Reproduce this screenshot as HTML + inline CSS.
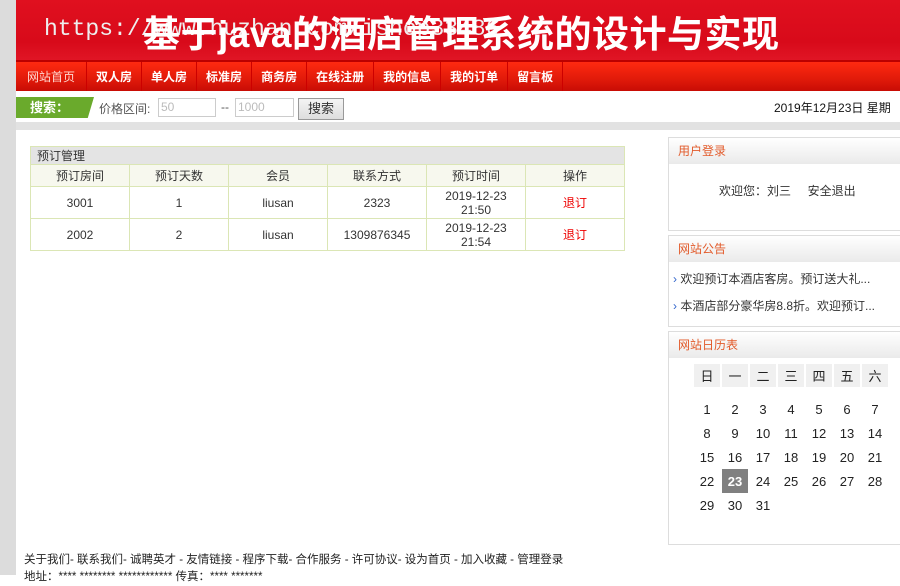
<!DOCTYPE html>
<html><head><meta charset="utf-8"><style>
*{margin:0;padding:0;box-sizing:border-box}
body{width:900px;height:575px;overflow:hidden;background:#fff;font-family:"Liberation Sans","Noto Sans CJK SC",sans-serif;font-size:12px;color:#333;position:relative}
.abs{position:absolute}
#strip{left:0;top:0;width:16px;height:575px;background:#dcdcdc}
#hdr{left:16px;top:0;width:884px;height:60px;background:linear-gradient(#e0101f,#d80a1a 70%,#e01525)}
#url{left:44px;top:16px;font-family:"Liberation Mono",monospace;font-size:23px;color:#eee}
#title{left:143px;top:4px;font-size:37px;font-weight:bold;color:#fff;white-space:nowrap;letter-spacing:0.5px}
#nav{left:16px;top:60px;width:884px;height:31px;background:linear-gradient(#ff2a10,#e01a0a 60%,#c80c05);border-top:2px solid #b00}
#nav span{float:left;height:29px;line-height:30px;color:#fff;font-weight:bold;font-size:12px;padding:0 9px;border-right:1px solid #c00}
#nav span.a{color:#ffd7cf;font-weight:normal;padding:0 11px}
#srch{left:16px;top:91px;width:884px;height:31px;background:#fff}
#sl{left:16px;top:97px;width:78px;height:21px;background:#6aaa2c;color:#fff;font-weight:bold;font-size:13px;line-height:21px;padding-left:14px;clip-path:polygon(0 0,100% 0,92% 100%,0 100%)}
#gray{left:16px;top:122px;width:884px;height:8px;background:#e2e2e2}
#gray2{left:16px;top:130px;width:652px;height:15px;background:#fff}
table{border-collapse:collapse}
#tb{left:30px;top:146px;width:595px;border:1px solid #d4e2a8;table-layout:fixed}
#tb td{border:1px solid #dbe6b5;text-align:center;height:32px;font-size:12px}
#tb tr.h td{background:#f7f8ee;height:22px}
#tb tr.t td{background:#e4e4e4;text-align:left;padding-left:6px;height:17px}
.box{position:absolute;left:668px;width:232px;border:1px solid #ddd;border-right:none;background:#fff}
.bh{height:26px;line-height:26px;padding-left:9px;color:#e25a2a;font-size:12px;background:linear-gradient(#fff,#eaeaea)}
#cal{margin:6px 0 0 23px;border-collapse:separate;border-spacing:2px 0}
#cal td{width:26px;height:24px;text-align:center;font-size:13px;color:#222}
#cal tr.w td{background:#f0f0f0;height:23px}
#foot{left:24px;top:552px;font-size:11.5px;color:#222;line-height:17px}
</style></head><body>
<div class="abs" id="strip"></div>
<div class="abs" id="hdr"></div>
<div class="abs" id="url">https://www.huzhan.com/ishop33486</div>
<div class="abs" id="title">基于java的酒店管理系统的设计与实现</div>
<div class="abs" id="nav"><span class="a">网站首页</span><span>双人房</span><span>单人房</span><span>标准房</span><span>商务房</span><span>在线注册</span><span>我的信息</span><span>我的订单</span><span>留言板</span></div>
<div class="abs" id="srch"></div>
<div class="abs" id="sl">搜索：</div>
<div class="abs" style="left:99px;top:100px;color:#555">价格区间:</div>
<div class="abs" style="left:158px;top:98px;width:58px;height:19px;border:1px solid #ccc;color:#bbb;padding-left:2px;line-height:17px">50</div>
<div class="abs" style="left:221px;top:100px;color:#555">--</div>
<div class="abs" style="left:235px;top:98px;width:59px;height:19px;border:1px solid #ccc;color:#bbb;padding-left:2px;line-height:17px">1000</div>
<div class="abs" style="left:298px;top:98px;width:46px;height:22px;border:1px solid #999;background:linear-gradient(#f4f4f4,#ddd);text-align:center;line-height:20px;font-size:13px">搜索</div>
<div class="abs" style="left:774px;top:99px;color:#111">2019年12月23日 星期一</div>
<div class="abs" id="gray"></div>
<div class="abs" id="gray2"></div>
<table class="abs" id="tb">
<tr class="t"><td colspan="6">预订管理</td></tr>
<tr class="h"><td>预订房间</td><td>预订天数</td><td>会员</td><td>联系方式</td><td>预订时间</td><td>操作</td></tr>
<tr><td>3001</td><td>1</td><td>liusan</td><td>2323</td><td>2019-12-23<br>21:50</td><td style="color:#e00">退订</td></tr>
<tr><td>2002</td><td>2</td><td>liusan</td><td>1309876345</td><td>2019-12-23<br>21:54</td><td style="color:#e00">退订</td></tr>
</table>
<div class="box" style="top:137px;height:94px"><div class="bh">用户登录</div><div style="margin:18px 0 0 50px">欢迎您：刘三 &nbsp;&nbsp;&nbsp; 安全退出</div></div>
<div class="box" style="top:235px;height:92px"><div class="bh">网站公告</div>
<div style="margin:4px 0 0 4px;line-height:27px"><span style="color:#36c">›</span> 欢迎预订本酒店客房。预订送大礼...<br><span style="color:#36c">›</span> 本酒店部分豪华房8.8折。欢迎预订...</div></div>
<div class="box" style="top:331px;height:214px"><div class="bh">网站日历表</div>
<table id="cal">
<tr class="w"><td>日</td><td>一</td><td>二</td><td>三</td><td>四</td><td>五</td><td>六</td></tr>
<tr><td style="height:10px" colspan="7"></td></tr>
<tr><td>1</td><td>2</td><td>3</td><td>4</td><td>5</td><td>6</td><td>7</td></tr>
<tr><td>8</td><td>9</td><td>10</td><td>11</td><td>12</td><td>13</td><td>14</td></tr>
<tr><td>15</td><td>16</td><td>17</td><td>18</td><td>19</td><td>20</td><td>21</td></tr>
<tr><td>22</td><td style="background:#808080;color:#fff;font-weight:bold">23</td><td>24</td><td>25</td><td>26</td><td>27</td><td>28</td></tr>
<tr><td>29</td><td>30</td><td>31</td><td></td><td></td><td></td><td></td></tr>
</table></div>
<div class="abs" id="foot">关于我们- 联系我们- 诚聘英才 - 友情链接 - 程序下载- 合作服务 - 许可协议- 设为首页 - 加入收藏 - 管理登录<br>地址：**** ******** ************ 传真：**** *******</div>
</body></html>
